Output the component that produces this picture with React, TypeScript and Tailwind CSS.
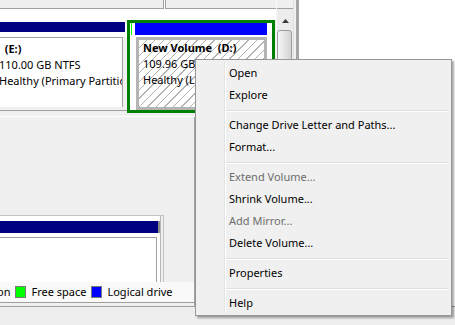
import type { ReactNode } from 'react';

type MenuEntry = { label: string; disabled?: boolean } | 'sep';

const MENU: MenuEntry[] = [
  { label: 'Open' },
  { label: 'Explore' },
  'sep',
  { label: 'Change Drive Letter and Paths...' },
  { label: 'Format...' },
  'sep',
  { label: 'Extend Volume...', disabled: true },
  { label: 'Shrink Volume...' },
  { label: 'Add Mirror...', disabled: true },
  { label: 'Delete Volume...' },
  'sep',
  { label: 'Properties' },
  'sep',
  { label: 'Help' },
];

function Swatch({ color }: { color: string }) {
  return <span className="w-[11px] h-[12px] border border-[#7a7a7a]" style={{ background: color }} />;
}

function VolumeText({ children }: { children: ReactNode }) {
  return <div className="leading-[16px] whitespace-pre overflow-hidden">{children}</div>;
}

function ContextMenu() {
  return (
    <div className="absolute left-[195px] top-[59px] w-[257px] border border-[#979797] bg-[#f0f0f0] pt-[2px] pb-[1px] shadow-[2px_2px_2px_rgba(0,0,0,0.35)]">
      {/* icon gutter */}
      <div className="absolute left-[28px] top-[2px] bottom-[2px] w-[2px] border-l border-[#e2e3e3] border-r border-r-white" />
      {MENU.map((item, i) =>
        item === 'sep' ? (
          <div key={i} className="ml-[29px] mr-[2px] mt-[4px] mb-[2px] h-[2px] border-t border-[#e0e0e0] border-b border-b-white" />
        ) : (
          <div
            key={i}
            className={`relative h-[22px] pl-[33px] flex items-center ${item.disabled ? 'text-[#6d6d6d]' : 'text-black'}`}
          >
            {item.label}
          </div>
        )
      )}
    </div>
  );
}

export default function App() {
  return (
    <div className="relative w-[455px] h-[325px] overflow-hidden bg-white font-['Noto_Sans',sans-serif] text-[11px] text-black">
      <div className="flex h-[306px]">
        {/* Disk Management pane */}
        <div className="w-[299px] flex flex-col">
          <div className="h-[116px] flex">
            {/* graphical disk area */}
            <div className="w-[276px] flex flex-col bg-[#f0f0f0]">
              <div className="h-[9px] flex bg-white">
                <div className="w-[164px] border-b border-r border-[#a0a0a0] bg-[#f0f0f0]" />
                <div className="flex-1 ml-[1px] border-b border-l border-[#a0a0a0] bg-[#f0f0f0]" />
              </div>
              <div className="h-[11px] bg-white" />
              <div className="h-[93px] flex items-start">
                {/* (E:) primary partition */}
                <div className="w-[127px] h-[91px] flex flex-col bg-white border-b border-[#a0a0a0]">
                  <div className="h-[2px]" />
                  <div className="h-[10px] mr-[2px] bg-[#000080]" />
                  <div className="h-[5px]" />
                  <div className="h-[70px] flex bg-[#f0f0f0]">
                    <div className="w-[124px] -ml-[1px] border-t border-r border-[#a0a0a0] bg-white pt-[3px] overflow-hidden">
                      <VolumeText>
                        <b>{'  (E:)'}</b>
                      </VolumeText>
                      <VolumeText>110.00 GB NTFS</VolumeText>
                      <VolumeText>Healthy (Primary Partition)</VolumeText>
                    </div>
                  </div>
                  <div className="h-[3px] bg-[#f0f0f0]" />
                </div>
                {/* (D:) logical drive, selected */}
                <div className="w-[148px] h-[93px] border-[3px] border-[#008000] bg-white flex flex-col">
                  <div className="h-[12px] flex">
                    <div className="ml-[1px] w-[1px] bg-[#00ff00]" />
                    <div className="ml-[3px] w-[132px] bg-[#0000ff]" />
                  </div>
                  <div className="h-[2px]" />
                  <div className="ml-[6px] w-[131px] h-[73px] border-[3px] border-[#b4b4b4] pl-[4px] overflow-hidden bg-[repeating-linear-gradient(135deg,#ffffff_0_5px,#b2b2b2_5px_6px)]">
                    <VolumeText>
                      <b>{'New Volume  (D:)'}</b>
                    </VolumeText>
                    <VolumeText>109.96 GB NTFS</VolumeText>
                    <VolumeText>Healthy (Logical Drive)</VolumeText>
                  </div>
                </div>
              </div>
            </div>
            {/* vertical scrollbar */}
            <div className="w-[17px] flex flex-col bg-[#ececec] border-l border-[#f8f8f8]">
              <div className="h-[9px] bg-[#f0f0f0] border-b border-[#a0a0a0]" />
              <div className="h-[21px] flex justify-center pt-[10px]">
                <svg width="7" height="4" viewBox="0 0 7 4">
                  <path d="M0 4 L3.5 0 L7 4 Z" fill="#3c3c3c" />
                </svg>
              </div>
              <div className="flex-1 mr-[1px] rounded-[3px] border border-[#9d9d9d] bg-gradient-to-r from-[#f6f6f6] to-[#d4d4d4]" />
            </div>
            {/* window edge */}
            <div className="w-[6px] bg-[#f0f0f0] border-l border-[#e0e0e0] border-r-[3px] border-r-[#a5a5a5]" />
          </div>

          <div className="flex-1 flex border-t border-white bg-[#f0f0f0]">
            <div className="w-[195px] flex flex-col border-r border-[#a0a0a0]">
              <div className="flex-1" />
              {/* second disk */}
              <div className="w-[164px] h-[67px] flex border-t border-r border-[#c4c4c4]">
                <div className="w-[161px] flex flex-col bg-white border-r border-[#b8b8b8]">
                  <div className="h-[5px]" />
                  <div className="h-[12px] flex">
                    <div className="w-[158px] bg-[#000080]" />
                    <div className="w-[2px] bg-[#8a8a8a]" />
                  </div>
                  <div className="h-[4px]" />
                  <div className="w-[157px] flex-1 border-t border-r border-[#a0a0a0]" />
                </div>
              </div>
              {/* legend */}
              <div className="h-[21px] flex items-center gap-[5px] bg-[#f9f9f9] border-b border-[#a0a0a0] overflow-hidden">
                <span className="-ml-[3px]">on</span>
                <Swatch color="#00ff00" />
                <span>Free space</span>
                <Swatch color="#0000ff" />
                <span>Logical drive</span>
              </div>
              <div className="h-[3px]" />
            </div>
            <div className="flex-1" />
          </div>
        </div>
        <div className="flex-1 bg-white" />
      </div>
      <div className="h-[19px] border-t border-[#a0a0a0] bg-[#efeeee]" />

      <ContextMenu />
    </div>
  );
}
